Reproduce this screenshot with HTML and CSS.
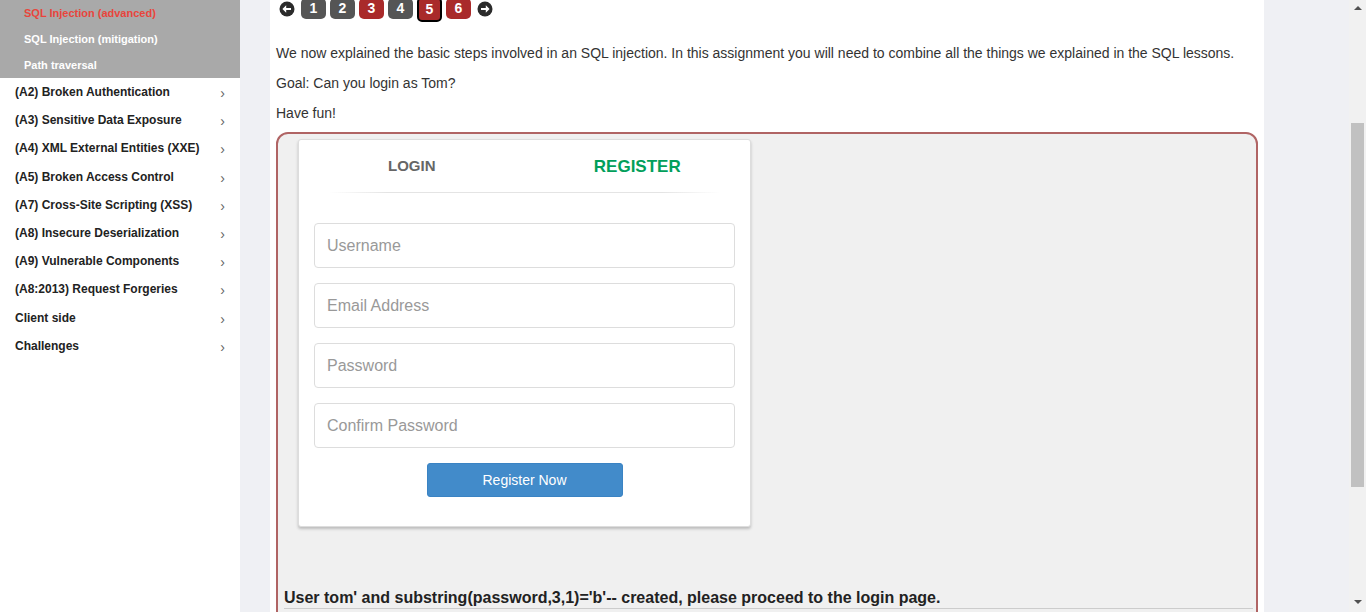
FILE: index.html
```html
<!DOCTYPE html>
<html>
<head>
<meta charset="utf-8">
<link rel="stylesheet" href="styles.css">
</head>
<body>
<div class="page">
  <aside class="sidebar">
    <ul class="submenu">
      <li class="active">SQL Injection (advanced)</li>
      <li>SQL Injection (mitigation)</li>
      <li>Path traversal</li>
    </ul>
    <ul class="menu">
      <li><span>(A2) Broken Authentication</span><i class="chev">›</i></li>
      <li><span>(A3) Sensitive Data Exposure</span><i class="chev">›</i></li>
      <li><span>(A4) XML External Entities (XXE)</span><i class="chev">›</i></li>
      <li><span>(A5) Broken Access Control</span><i class="chev">›</i></li>
      <li><span>(A7) Cross-Site Scripting (XSS)</span><i class="chev">›</i></li>
      <li><span>(A8) Insecure Deserialization</span><i class="chev">›</i></li>
      <li><span>(A9) Vulnerable Components</span><i class="chev">›</i></li>
      <li><span>(A8:2013) Request Forgeries</span><i class="chev">›</i></li>
      <li><span>Client side</span><i class="chev">›</i></li>
      <li><span>Challenges</span><i class="chev">›</i></li>
    </ul>
  </aside>
  <div class="gutter-left"></div>
  <main class="main">
    <nav class="pager">
      <svg class="arrow" width="16" height="16" viewBox="0 0 16 16"><circle cx="8" cy="8" r="7.5" fill="#2b2b2b"/><path d="M12 7H7.2V4.3L3.4 8l3.8 3.7V9H12z" fill="#fff"/></svg>
      <span class="pg grey">1</span>
      <span class="pg grey">2</span>
      <span class="pg red">3</span>
      <span class="pg grey">4</span>
      <span class="pg red current">5</span>
      <span class="pg red">6</span>
      <svg class="arrow" width="16" height="16" viewBox="0 0 16 16"><circle cx="8" cy="8" r="7.5" fill="#2b2b2b"/><path d="M4 7h4.8V4.3L12.6 8l-3.8 3.7V9H4z" fill="#fff"/></svg>
    </nav>
    <p>We now explained the basic steps involved in an SQL injection. In this assignment you will need to combine all the things we explained in the SQL lessons.</p>
    <p>Goal: Can you login as Tom?</p>
    <p>Have fun!</p>
    <section class="attack">
      <div class="card">
        <div class="tabs">
          <div class="tab login">LOGIN</div>
          <div class="tab register">REGISTER</div>
        </div>
        <div class="sep"></div>
        <form class="form">
          <input class="field" type="text" placeholder="Username">
          <input class="field" type="text" placeholder="Email Address">
          <input class="field" type="password" placeholder="Password">
          <input class="field" type="password" placeholder="Confirm Password">
          <div class="btnrow"><button type="button" class="btn">Register Now</button></div>
        </form>
      </div>
      <div class="feedback">User tom' and substring(password,3,1)='b'-- created, please proceed to the login page.</div>
      <div class="rule"></div>
    </section>
  </main>
  <div class="gutter-right"></div>
  <div class="scrollbar">
    <div class="sb-up"></div>
    <div class="sb-track"><div class="sb-thumb"></div></div>
    <div class="sb-down"></div>
  </div>
</div>
</body>
</html>
```

FILE: styles.css
```css
* { box-sizing: border-box; }
html, body { margin: 0; padding: 0; height: 612px; overflow: hidden; }
body { font-family: "Liberation Sans", Arial, sans-serif; color: #333; background: #fff; }

.page { display: flex; height: 612px; overflow: hidden; }

.sidebar { width: 240px; flex: none; background: #fff; }
.submenu { list-style: none; margin: 0; padding: 0; background: #a9a9a9; }
.submenu li { height: 26px; line-height: 26px; padding-left: 24px; font-size: 11px; font-weight: bold; color: #fff; }
.submenu li.active { color: #e8453c; }
.menu { list-style: none; margin: 0; padding: 0; }
.menu li { height: 28.2px; display: flex; align-items: center; justify-content: space-between; padding: 0 15px 0 15px; font-size: 12px; font-weight: bold; color: #222; }
.chev { font-style: normal; font-weight: normal; color: #666; font-size: 14px; padding-top: 2px; }

.gutter-left { width: 30px; flex: none; background: #eff0f4; }
.gutter-right { width: 85px; flex: none; background: #eff0f4; }

.main { width: 994px; flex: none; background: #fff; padding: 0 6px; overflow: hidden; }

.pager { display: flex; align-items: center; height: 20px; margin-top: -2px; padding-left: 3px; gap: 4px; }
.arrow { margin-top: 1px; }
.pager .arrow:first-child { margin-right: 2px; }
.pager .arrow:last-child { margin-left: 2px; }
.pg { width: 25px; height: 21px; border-radius: 5px; color: #fff; font-weight: bold; font-size: 14px; display: flex; align-items: center; justify-content: center; }
.pg.grey { background: #555; }
.pg.red { background: #a92a2a; }
.pg.current { border: 2px solid #000; height: 25px; margin-top: 2px; }

.main p { margin: 0 0 10px; font-size: 14px; line-height: 20px; color: #333; }
.main p:first-of-type { margin-top: 25px; }

.attack { margin-top: -1px; border: 2px solid #b06464; border-radius: 12px; background: #f0f0f0; height: 520px; padding: 5px 0 0; }
.card { margin-left: 20px; width: 453px; background: #fff; border: 1px solid #ddd; border-radius: 3px; box-shadow: 0 2px 3px rgba(0,0,0,0.22); padding: 15px 15px 29px; }
.tabs { display: flex; margin: 0 -15px; height: 22px; }
.tab { flex: 1; text-align: center; font-weight: bold; line-height: 22px; }
.tab.login { font-size: 15px; color: #666; }
.tab.register { font-size: 17px; color: #029f5b; padding-top: 1px; }
.sep { height: 1px; margin: 15px 15px 0; background: linear-gradient(to right, rgba(230,230,230,0), #e4e4e4 15%, #e4e4e4 85%, rgba(230,230,230,0)); }
.form { margin: 30px 0 0; display: flex; flex-direction: column; gap: 15px; }
.field { width: 100%; height: 45px; border: 1px solid #ddd; border-radius: 4px; padding: 0 12px; font-family: "Liberation Sans", Arial, sans-serif; font-size: 16px; color: #555; background: #fff; }
.field::placeholder { color: #999; }
.btnrow { display: flex; justify-content: center; }
.btn { width: 196px; height: 34px; border: 1px solid #3a83c3; border-radius: 3px; background: #428bca; color: #fff; font-family: "Liberation Sans", Arial, sans-serif; font-size: 14px; }

.feedback { margin: 61px 0 0 6px; font-size: 16px; font-weight: bold; color: #222; line-height: 20px; }
.rule { margin: 0 3px 0 6px; height: 1px; background: #ccc; }

.scrollbar { width: 17px; flex: none; background: #f1f1f1; display: flex; flex-direction: column; }
.sb-up, .sb-down { height: 17px; flex: none; position: relative; }
.sb-up::after { content: ""; position: absolute; left: 5px; top: 6px; border-left: 4px solid transparent; border-right: 4px solid transparent; border-bottom: 4px solid #505050; }
.sb-down::after { content: ""; position: absolute; left: 5px; top: 5px; border-left: 4px solid transparent; border-right: 4px solid transparent; border-top: 4px solid #505050; }
.sb-track { flex: 1; padding: 106px 2px 0; }
.sb-thumb { height: 364px; background: #c1c1c1; }
```
